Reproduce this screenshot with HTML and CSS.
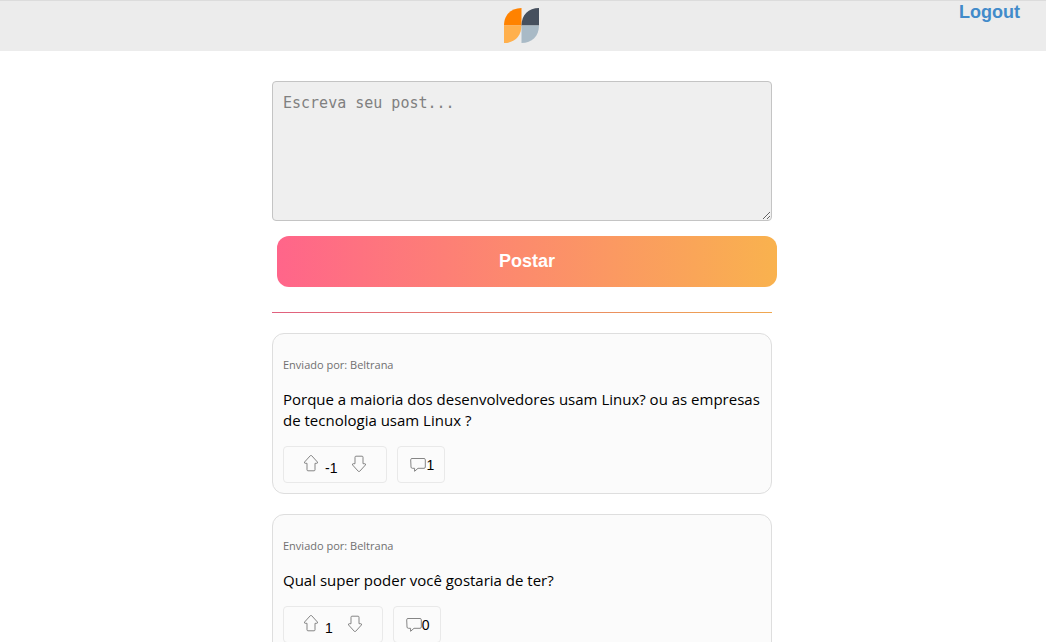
FILE: index.html
```html
<!DOCTYPE html>
<html lang="pt-BR">
<head>
<meta charset="utf-8">
<meta name="viewport" content="width=device-width, initial-scale=1">
<title>Posts</title>
<link rel="stylesheet" href="styles.css">
</head>
<body>
<svg class="sprite" aria-hidden="true">
  <symbol id="arrow" viewBox="0 0 16 18">
    <path d="M7.300 1.700Q8 1 8.700 1.700L14.400 8Q15 9.300 13.800 9.300H12V15.800Q12 16.800 11 16.800H5Q4 16.800 4 15.800V9.300H2.200Q1 9.300 1.600 8Z"/>
  </symbol>
  <symbol id="bubble" viewBox="0 0 16 16">
    <path d="M2 1.500H14Q15.300 1.500 15.300 2.800V10Q15.300 11.300 14 11.300H8L4.600 14.300V11.300H2.400Q1.100 11.300 1 10L.7 2.800Q.7 1.500 2 1.500Z"/>
  </symbol>
</svg>
<header class="topbar">
  <svg class="logo" viewBox="0 0 35 35" role="img" aria-label="Logo">
    <path fill="#ff8200" d="M0 17.500C0 7 7 0 17.500 0V17.500Z"/>
    <path fill="#ffb04d" d="M0 17.500H17.500C17.500 28 10.500 35 0 35Z"/>
    <path fill="#46505e" d="M17.500 17.500C17.500 7 24.500 0 35 0V17.500Z"/>
    <path fill="#a9bac6" d="M17.500 17.500H35C35 28 28 35 17.500 35Z"/>
  </svg>
  <a class="logout" href="#">Logout</a>
</header>
<main class="feed">
  <form class="composer">
    <textarea class="composer-text" placeholder="Escreva seu post..." aria-label="Escreva seu post"></textarea>
    <button class="composer-send" type="button">Postar</button>
  </form>
  <hr class="divider">
  <article class="post">
    <p class="author">Enviado por: Beltrana</p>
    <p class="message">Porque a maioria dos desenvolvedores usam Linux? ou as empresas de tecnologia usam Linux ?</p>
    <div class="actions">
      <div class="box votes">
        <button class="vote" type="button" aria-label="Votar a favor"><svg class="arrow"><use href="#arrow"/></svg></button>
        <span class="score">-1</span>
        <button class="vote down" type="button" aria-label="Votar contra"><svg class="arrow"><use href="#arrow"/></svg></button>
      </div>
      <button class="box comments" type="button" aria-label="Comentários: 1"><svg class="bubble"><use href="#bubble"/></svg>1</button>
    </div>
  </article>
  <article class="post">
    <p class="author">Enviado por: Beltrana</p>
    <p class="message">Qual super poder você gostaria de ter?</p>
    <div class="actions">
      <div class="box votes">
        <button class="vote" type="button" aria-label="Votar a favor"><svg class="arrow"><use href="#arrow"/></svg></button>
        <span class="score">1</span>
        <button class="vote down" type="button" aria-label="Votar contra"><svg class="arrow"><use href="#arrow"/></svg></button>
      </div>
      <button class="box comments" type="button" aria-label="Comentários: 0"><svg class="bubble"><use href="#bubble"/></svg>0</button>
    </div>
  </article>
</main>
</body>
</html>
```
FILE: styles.css
```css
* {
  box-sizing: border-box;
}

body {
  margin: 0;
  background: #fff;
  color: #000;
  font-family: "Open Sans", "Noto Sans", sans-serif;
}

button {
  margin: 0;
  padding: 0;
  border: 0;
  background: none;
  color: inherit;
  font: inherit;
  cursor: pointer;
}

svg {
  display: block;
}

.sprite {
  display: none;
}

.topbar {
  display: grid;
  grid-template-columns: 1fr auto 1fr;
  padding: 7px 26px 8px 23px;
  border-top: 1px solid #dcdcdc;
  background: #ececec;
}

.logo {
  grid-column: 2;
  width: 35px;
  height: 35px;
}

.logout {
  justify-self: end;
  align-self: start;
  margin-top: -7px;
  color: #428bca;
  font: bold 18px/22px "Liberation Sans", Arial, sans-serif;
  text-decoration: none;
}

.feed {
  width: 100%;
  max-width: 502px;
  margin: 0 auto;
  padding: 30px 2px 20px 0;
}

.composer-text {
  display: block;
  width: 100%;
  height: 140px;
  padding: 10px;
  border: 1px solid #c4c4c4;
  border-radius: 4px;
  background: #efefef;
  font: 15px/22px "DejaVu Sans Mono", monospace;
  resize: both;
}

.composer-text::placeholder {
  color: #808080;
}

.composer-send {
  width: 100%;
  height: 51px;
  margin: 15px 0 0 5px;
  padding-bottom: 2px;
  border-radius: 12px;
  background: linear-gradient(to right, #ff658a, #f9b24e);
  color: #fff;
  font: bold 18px/20px "Liberation Sans", Arial, sans-serif;
}

.divider {
  height: 1px;
  margin: 25px 0 20px;
  border: 0;
  background: linear-gradient(to right, #e0607f, #f0a850);
}

.post {
  margin-bottom: 20px;
  padding: 20px 10px 10px;
  border: 1px solid #dedede;
  border-radius: 12px;
  background: #fbfbfb;
}

.author {
  margin: 0 0 13px;
  color: #707070;
  font-size: 11px;
  line-height: 22px;
}

.message {
  margin: 0 0 15px;
  font-size: 15px;
  line-height: 21px;
}

.actions {
  display: flex;
  gap: 10px;
  font: 14px/16px "Liberation Sans", Arial, sans-serif;
}

.box {
  display: flex;
  align-items: center;
  height: 37px;
  border: 1px solid #e9e9e9;
  border-radius: 4px;
}

.votes {
  gap: 6px;
  padding: 0 19px;
}

.vote {
  padding-bottom: 4px;
}

.down {
  margin-left: 8px;
  padding: 0 0 1px;
}

.down .arrow {
  transform: rotate(180deg);
}

.score {
  padding-top: 7px;
}

.comments {
  padding: 0 10px 0 12px;
}

.arrow,
.bubble {
  width: 16px;
  height: 18px;
  fill: none;
  stroke: #858585;
  stroke-width: 1;
}
```
